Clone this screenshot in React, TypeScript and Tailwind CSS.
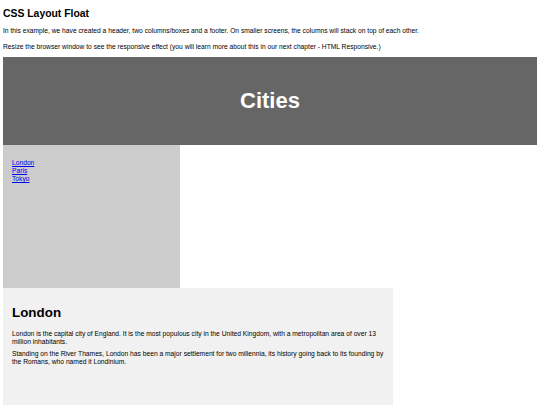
export default function App() {
  const links = ["London", "Paris", "Tokyo"];

  return (
    <div className="min-h-[405px] bg-white px-[3px] text-black font-['Liberation_Sans',Arial,sans-serif]">
      <h2 className="pt-[7px] text-[10.4px] font-bold leading-[14px]">CSS Layout Float</h2>
      <p className="mt-[6px] text-[6.7px] leading-[8px]">
        In this example, we have created a header, two columns/boxes and a footer. On smaller screens, the columns will
        stack on top of each other.
      </p>
      <p className="mt-[8px] text-[6.7px] leading-[8px]">
        Resize the browser window to see the responsive effect (you will learn more about this in our next chapter - HTML
        Responsive.)
      </p>

      <header className="mt-[6px] flex h-[88px] items-center justify-center bg-[#666666] text-white">
        <h2 className="text-[22px] font-bold leading-none">Cities</h2>
      </header>

      <section className="flex flex-col">
        <nav className="h-[143px] w-[177px] bg-[#cccccc] px-[9px] pt-[14px]">
          <ul className="text-[6.7px] leading-[8px]">
            {links.map((name) => (
              <li key={name}>
                <a href="#" className="text-[#0000ee] underline">
                  {name}
                </a>
              </li>
            ))}
          </ul>
        </nav>

        <article className="h-[117px] w-[390px] bg-[#f1f1f1] px-[9px] pt-[17px]">
          <h1 className="text-[13.4px] font-bold leading-[16px]">London</h1>
          <p className="mt-[9px] text-[6.7px] leading-[7.5px]">
            London is the capital city of England. It is the most populous city in the United Kingdom, with a metropolitan
            area of over 13 million inhabitants.
          </p>
          <p className="mt-[5px] text-[6.7px] leading-[7.5px]">
            Standing on the River Thames, London has been a major settlement for two millennia, its history going back to
            its founding by the Romans, who named it Londinium.
          </p>
        </article>
      </section>
    </div>
  );
}
